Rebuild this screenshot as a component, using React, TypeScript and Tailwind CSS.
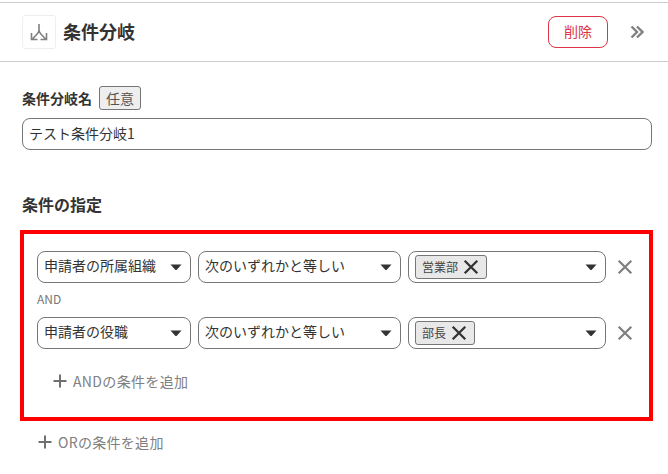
import React from "react";

function Caret() {
  return (
    <svg width="12" height="7" viewBox="0 0 12 7" className="shrink-0">
      <path d="M0.5 0.5H11.5L7 5.6Q6 6.6 5 5.6Z" fill="#333333" />
    </svg>
  );
}

function Cross({ size, color }: { size: number; color: string }) {
  return (
    <svg width={size} height={size} viewBox="0 0 14 14" className="shrink-0">
      <path d="M1.5 1.5L12.5 12.5M12.5 1.5L1.5 12.5" stroke={color} strokeWidth="2" fill="none" />
    </svg>
  );
}

function Plus() {
  return (
    <svg width="14" height="14" viewBox="0 0 14 14" className="shrink-0">
      <path d="M7 0.5V13.5M0.5 7H13.5" stroke="#707070" strokeWidth="2" fill="none" />
    </svg>
  );
}

function Select({ label, className }: { label: string; className: string }) {
  return (
    <div className={`flex h-8 items-center justify-between rounded-lg border border-[#767676] pl-[6px] pr-[8px] ${className}`}>
      <span className="pb-[3px] text-[14px] text-[#333333]">{label}</span>
      <Caret />
    </div>
  );
}

function ConditionRow({ field, tag }: { field: string; tag: string }) {
  return (
    <div className="flex items-center">
      <Select label={field} className="w-[154px]" />
      <Select label="次のいずれかと等しい" className="ml-[7px] w-[203px]" />
      <div className="ml-[7px] flex h-8 w-[198px] items-center justify-between rounded-lg border border-[#767676] pl-[6px] pr-[8px]">
        <div className="flex h-6 items-center gap-[5px] rounded-[3px] border border-[#767676] bg-[#e8e8e8] pl-[6px] pr-[7px]">
          <span className="text-[12px] text-[#444444]">{tag}</span>
          <Cross size={16} color="#333333" />
        </div>
        <Caret />
      </div>
      <div className="ml-[11px]">
        <Cross size={16} color="#808080" />
      </div>
    </div>
  );
}

export default function App() {
  return (
    <div className="h-[474px] w-[668px] overflow-hidden bg-white pt-[2px] font-['Noto_Sans_CJK_JP','Liberation_Sans',sans-serif] text-[#333333]">
      {/* Header */}
      <div className="flex h-[60px] items-center border-y border-[#cccccc] pl-[22px] pr-[24px]">
        <div className="flex h-[34px] w-[34px] items-center justify-center rounded-[3px] border border-[#eeeeee]">
          <svg width="18" height="18" viewBox="0 0 18 18">
            <path
              d="M9 1V7Q9 9 7.5 10.5L2.5 16M9 7Q9 9 10.5 10.5L15.5 16M1.5 10V16.5H7.5M16.5 10V16.5H10.5"
              stroke="#808080"
              strokeWidth="1.6"
              fill="none"
            />
          </svg>
        </div>
        <h1 className="ml-[7px] pb-[3px] text-[18px] font-bold leading-none">条件分岐</h1>
        <button className="ml-auto h-8 w-[60px] rounded-lg border border-[#dc3545] pb-[1px] text-[14px] text-[#dc3545]">
          削除
        </button>
        <svg width="14" height="14" viewBox="0 0 14 14" className="ml-[22px]">
          <path d="M1.5 1.5L7 7L1.5 12.5M7 1.5L12.5 7L7 12.5" stroke="#808080" strokeWidth="2.4" fill="none" />
        </svg>
      </div>

      {/* Name field */}
      <div className="px-[22px] pt-6">
        <div className="flex h-6 items-center">
          <span className="text-[14px] font-bold">条件分岐名</span>
          <span className="ml-[7px] flex h-6 w-[42px] items-center justify-center rounded-[3px] border border-[#767676] bg-[#eeeeee] text-[14px] text-[#555555]">
            任意
          </span>
        </div>
        <div className="mt-2 flex h-8 w-[630px] items-center rounded-lg border border-[#767676] px-[6px] pb-[1px] text-[14px]">
          テスト条件分岐1
        </div>
        <h2 className="mt-[42px] pb-[1px] text-[16px] font-bold leading-6">条件の指定</h2>
      </div>

      {/* Conditions */}
      <div className="ml-5 mt-[13px] h-[191px] w-[633px] border-4 border-[#ff0000] pl-[13px] pt-[17px]">
        <ConditionRow field="申請者の所属組織" tag="営業部" />
        <div className="flex h-[34px] items-center pb-[2px] text-[12px] text-[#767676]">AND</div>
        <ConditionRow field="申請者の役職" tag="部長" />
        <div className="ml-4 mt-[22px] flex h-5 items-center gap-[6px] text-[14px] tracking-[0.35px] text-[#808080]">
          <Plus />
          ANDの条件を追加
        </div>
      </div>
      <div className="ml-[38px] mt-[11px] flex h-5 items-center gap-[6px] text-[14px] tracking-[0.3px] text-[#808080]">
        <Plus />
        ORの条件を追加
      </div>
    </div>
  );
}
